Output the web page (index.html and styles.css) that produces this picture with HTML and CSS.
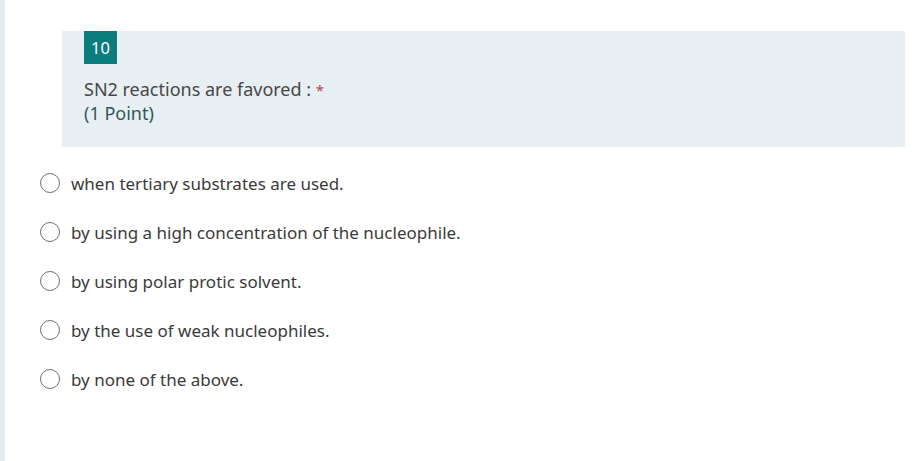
FILE: index.html
```html
<!DOCTYPE html>
<html>
<head>
<meta charset="utf-8">
<link rel="stylesheet" href="styles.css">
</head>
<body>
<div class="page">
  <div class="strip"></div>
  <main class="content">
    <section class="question">
      <div class="badge">10</div>
      <div class="qtext">SN2 reactions are favored : <span class="req">*</span></div>
      <div class="points">(1 Point)</div>
    </section>
    <ul class="options">
      <li class="option"><span class="radio"></span><span class="label">when tertiary substrates are used.</span></li>
      <li class="option"><span class="radio"></span><span class="label">by using a high concentration of the nucleophile.</span></li>
      <li class="option"><span class="radio"></span><span class="label">by using polar protic solvent.</span></li>
      <li class="option"><span class="radio"></span><span class="label">by the use of weak nucleophiles.</span></li>
      <li class="option"><span class="radio"></span><span class="label">by none of the above.</span></li>
    </ul>
  </main>
</div>
</body>
</html>
```
FILE: styles.css
```css
html, body {
  margin: 0;
  padding: 0;
  background: #ffffff;
}
body {
  font-family: "Noto Sans", "Open Sans", sans-serif;
  color: #333333;
}
.page {
  display: flex;
  width: 914px;
  height: 461px;
  overflow: hidden;
}
.strip {
  width: 5px;
  flex: 0 0 5px;
  background: #e4ecef;
}
.content {
  flex: 1;
}
.question {
  margin: 31px 0 0 57px;
  width: 843px;
  height: 116px;
  box-sizing: border-box;
  padding-left: 22px;
  background: #e8eff2;
}
.badge {
  width: 33px;
  height: 33px;
  background: #0b7c7c;
  color: #ffffff;
  font-size: 16.5px;
  line-height: 33px;
  text-align: center;
}
.qtext {
  margin-top: 14px;
  font-size: 18px;
  line-height: 23px;
  color: #474747;
}
.req {
  color: #b4474c;
  font-size: 15px;
}
.points {
  font-size: 18px;
  line-height: 23px;
  color: #2e5a5a;
}
.options {
  list-style: none;
  margin: 24px 0 0 35px;
  padding: 0;
  display: flex;
  flex-direction: column;
  gap: 25px;
}
.option {
  display: flex;
  align-items: center;
  height: 24px;
}
.radio {
  width: 18px;
  height: 18px;
  border: 1px solid #707070;
  border-radius: 50%;
  background: #fff;
  flex: 0 0 auto;
}
.label {
  margin-left: 11px;
  font-size: 17px;
  color: #3a3a3a;
}
```
